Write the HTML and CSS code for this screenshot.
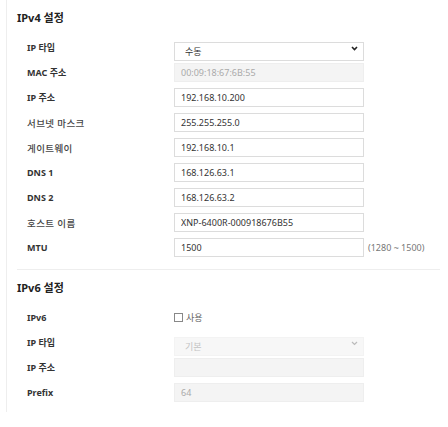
FILE: index.html
```html
<!DOCTYPE html>
<html lang="ko">
<head>
  <meta charset="UTF-8" />
  <title>네트워크 설정</title>
  <link rel="stylesheet" href="styles.css">
</head>
<body>
  <div class="panel">
    <h3>IPv4 설정</h3>
    <div class="rows">
      <div class="row">
        <label>IP 타입</label>
        <div class="select-wrap">
          <select class="field">
            <option>수동</option>
            <option>DHCP</option>
          </select>
          <svg class="chev" width="7" height="5" viewBox="0 0 7 5"><path d="M1 1 L3.5 3.5 L6 1" fill="none" stroke="#222" stroke-width="1.6"/></svg>
        </div>
      </div>
      <div class="row">
        <label>MAC 주소</label>
        <input class="field" value="00:09:18:67:6B:55" disabled>
      </div>
      <div class="row">
        <label>IP 주소</label>
        <input class="field" value="192.168.10.200">
      </div>
      <div class="row">
        <label class="thin">서브넷 마스크</label>
        <input class="field" value="255.255.255.0">
      </div>
      <div class="row">
        <label class="thin">게이트웨이</label>
        <input class="field" value="192.168.10.1">
      </div>
      <div class="row">
        <label>DNS 1</label>
        <input class="field" value="168.126.63.1">
      </div>
      <div class="row">
        <label>DNS 2</label>
        <input class="field" value="168.126.63.2">
      </div>
      <div class="row">
        <label class="thin">호스트 이름</label>
        <input class="field" value="XNP-6400R-000918676B55">
      </div>
      <div class="row">
        <label>MTU</label>
        <input class="field" value="1500">
        <span class="hint">(1280 ~ 1500)</span>
      </div>
    </div>

    <hr class="sep">

    <h3>IPv6 설정</h3>
    <div class="rows">
      <div class="row">
        <label>IPv6</label>
        <span class="check"><span class="box"></span>사용</span>
      </div>
      <div class="row">
        <label>IP 타입</label>
        <div class="select-wrap">
          <select class="field" disabled>
            <option>기본</option>
          </select>
          <svg class="chev" width="7" height="5" viewBox="0 0 7 5"><path d="M1 1 L3.5 3.5 L6 1" fill="none" stroke="#bbb" stroke-width="1.2"/></svg>
        </div>
      </div>
      <div class="row">
        <label>IP 주소</label>
        <input class="field" value="" disabled>
      </div>
      <div class="row">
        <label>Prefix</label>
        <input class="field" value="64" disabled>
      </div>
    </div>
  </div>
</body>
</html>
```

FILE: styles.css
```css
body {
  margin: 0;
  background: #fff;
  color: #333;
  font-family: "Noto Sans", "Noto Sans CJK KR", sans-serif;
}
.panel {
  margin-left: 6px;
  width: 423px;
  border-left: 1px solid #eee;
  padding: 10px 0 10px 10px;
}
h3 {
  margin: 0 0 12px;
  font-size: 11px;
  line-height: 16px;
  font-weight: 700;
  color: #222;
}
.rows {
  display: flex;
  flex-direction: column;
  gap: 6px;
  padding-left: 10px;
}
.row {
  display: grid;
  grid-template-columns: 147px 190px auto;
  align-items: center;
  height: 19px;
}
.row label {
  font-size: 9px;
  font-weight: 700;
  color: #333;
}
.row label.thin {
  font-weight: 500;
  font-size: 9.5px;
  letter-spacing: 0.4px;
  color: #444;
}
.field {
  box-sizing: border-box;
  width: 190px;
  height: 19px;
  margin: 0;
  padding: 0 6px;
  border: 1px solid #dcdcdc;
  border-radius: 0;
  background: #fff;
  color: #333;
  font-family: inherit;
  font-size: 9px;
  outline: none;
}
.field:disabled {
  background: #f4f4f4;
  border-color: #eee;
  color: #aaa;
}
.select-wrap {
  position: relative;
  width: 190px;
  height: 19px;
}
select.field {
  appearance: none;
  -webkit-appearance: none;
  padding-left: 10px;
}
.chev {
  position: absolute;
  right: 6px;
  top: 8px;
  pointer-events: none;
}
.hint {
  margin-left: 4px;
  font-size: 9px;
  color: #777;
}
.sep {
  margin: 12px 0 10px;
  border: 0;
  border-top: 1px solid #eee;
}
.check {
  display: flex;
  align-items: center;
  gap: 3px;
  font-size: 9px;
  color: #666;
}
.box {
  box-sizing: border-box;
  width: 9px;
  height: 9px;
  border: 1px solid #888;
  background: #fff;
}
```
